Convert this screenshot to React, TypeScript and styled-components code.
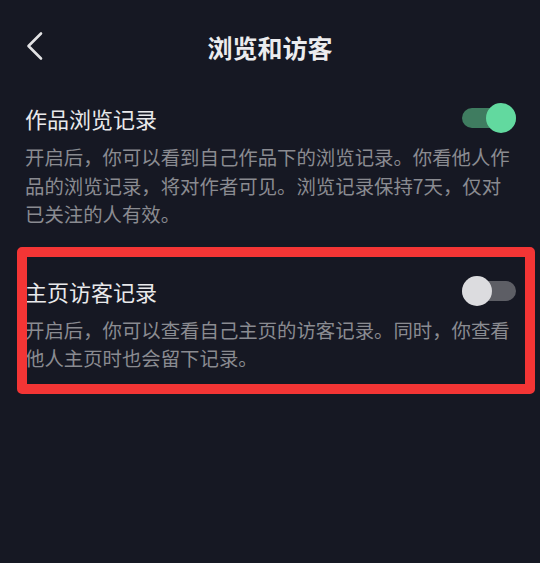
import React, { useState } from 'react';
import styled, { createGlobalStyle } from 'styled-components';

const GlobalStyle = createGlobalStyle`
  html, body {
    margin: 0;
    padding: 0;
    background: #161823;
  }

  body {
    font-family: "Noto Sans CJK SC", "Noto Sans", sans-serif;
    -webkit-font-smoothing: antialiased;
  }
`;

const Page = styled.div`
  position: relative;
  width: 540px;
  height: 563px;
  background: #161823;
  overflow: hidden;
`;

const Header = styled.div`
  position: relative;
  display: flex;
  align-items: center;
  justify-content: center;
  height: 92px;
  padding-top: 2px;
  box-sizing: border-box;
`;

const BackButton = styled.button`
  position: absolute;
  left: 25px;
  top: 31px;
  display: flex;
  padding: 0;
  border: none;
  background: none;
  cursor: pointer;
`;

const Title = styled.h1`
  margin: 0;
  color: #ececee;
  font-size: 25px;
  font-weight: 700;
  line-height: 32px;
`;

const Section = styled.section<{ $gap: number }>`
  padding: ${(p) => p.$gap}px 24px 0 25px;
`;

const Row = styled.div`
  display: flex;
  align-items: center;
  justify-content: space-between;
  height: 30px;
`;

const RowTitle = styled.div`
  color: #e9e9eb;
  font-size: 22px;
  line-height: 30px;
`;

const Description = styled.p`
  margin: 10px 0 0 0;
  color: #8a8b91;
  font-size: 19.4px;
  line-height: 28.5px;
`;

const Track = styled.button<{ $on: boolean }>`
  position: relative;
  width: 54px;
  height: 20px;
  padding: 0;
  border: none;
  border-radius: 10px;
  background: ${(p) => (p.$on ? '#3f7c60' : '#5d5e65')};
  cursor: pointer;
`;

const Knob = styled.span<{ $on: boolean }>`
  position: absolute;
  top: -5px;
  left: ${(p) => (p.$on ? '24px' : '0')};
  width: 30px;
  height: 30px;
  border-radius: 50%;
  background: ${(p) => (p.$on ? '#62d99f' : '#dcdcdf')};
`;

const Highlight = styled.div`
  position: absolute;
  left: 17px;
  top: 247px;
  width: 498px;
  height: 127px;
  border: 10px solid #f33535;
  border-radius: 5px;
  pointer-events: none;
`;

interface ToggleProps {
  on: boolean;
  onChange: (v: boolean) => void;
}

const Toggle = ({ on, onChange }: ToggleProps) => (
  <Track $on={on} onClick={() => onChange(!on)}>
    <Knob $on={on} />
  </Track>
);

const Chevron = () => (
  <svg width="18" height="30" viewBox="0 0 18 30" fill="none">
    <path
      d="M16 2.5 L3.5 15 L16 27.5"
      stroke="#e2e2e4"
      strokeWidth="2.6"
      strokeLinecap="round"
      strokeLinejoin="round"
    />
  </svg>
);

export default function App() {
  const [works, setWorks] = useState(true);
  const [visitors, setVisitors] = useState(false);

  return (
    <>
      <GlobalStyle />
      <Page>
        <Header>
          <BackButton>
            <Chevron />
          </BackButton>
          <Title>浏览和访客</Title>
        </Header>

        <Section $gap={11}>
          <Row>
            <RowTitle>作品浏览记录</RowTitle>
            <Toggle on={works} onChange={setWorks} />
          </Row>
          <Description>
            开启后，你可以看到自己作品下的浏览记录。你看他人作品的浏览记录，将对作者可见。浏览记录保持7天，仅对已关注的人有效。
          </Description>
        </Section>

        <Section $gap={47}>
          <Row>
            <RowTitle>主页访客记录</RowTitle>
            <Toggle on={visitors} onChange={setVisitors} />
          </Row>
          <Description>
            开启后，你可以查看自己主页的访客记录。同时，你查看他人主页时也会留下记录。
          </Description>
        </Section>

        <Highlight />
      </Page>
    </>
  );
}
